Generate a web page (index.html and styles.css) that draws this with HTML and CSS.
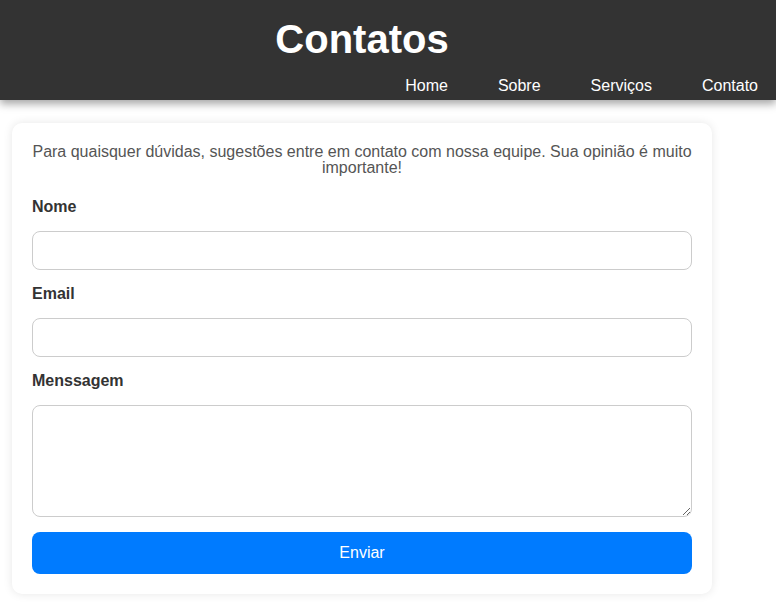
FILE: index.html
```html
<!DOCTYPE html>
<html lang="pt-BR">
<head>
<meta charset="utf-8">
<title>Contatos</title>
<link rel="stylesheet" href="styles.css">
</head>
<body>
<header class="site-header">
  <h1 class="site-title">Contatos</h1>
  <nav class="site-nav">
    <ul class="nav-list">
      <li><a href="#">Home</a></li>
      <li><a href="#">Sobre</a></li>
      <li><a href="#">Serviços</a></li>
      <li><a href="#">Contato</a></li>
    </ul>
  </nav>
</header>
<main class="main">
  <section class="card">
    <p class="intro">Para quaisquer dúvidas, sugestões entre em contato com nossa equipe. Sua opinião é muito importante!</p>
    <form class="form">
      <label class="label" for="nome">Nome</label>
      <input class="field" type="text" id="nome">
      <label class="label" for="email">Email</label>
      <input class="field" type="email" id="email">
      <label class="label" for="msg">Menssagem</label>
      <textarea class="field area" id="msg"></textarea>
      <button class="submit" type="submit">Enviar</button>
    </form>
  </section>
</main>
</body>
</html>
```
FILE: styles.css
```css
* { box-sizing: border-box; }
html, body { margin: 0; padding: 0; }
body {
  font-family: "Liberation Sans", Arial, sans-serif;
  background: #fff;
  color: #333;
}
.site-header {
  background: #333;
  color: #fff;
  height: 100px;
  padding-top: 16px;
  box-shadow: 0 4px 8px rgba(0,0,0,0.35);
  position: relative;
  z-index: 1;
}
.site-title {
  margin: 0;
  width: 724px;
  text-align: center;
  font-size: 40px;
  font-weight: bold;
  line-height: 46px;
}
.site-nav { margin-top: 15px; }
.nav-list {
  list-style: none;
  margin: 0;
  padding: 0 18px 0 0;
  display: flex;
  justify-content: flex-end;
  gap: 50px;
}
.nav-list a {
  color: #fff;
  text-decoration: none;
  font-size: 16px;
  line-height: 18px;
}
.main { padding: 23px 0 20px 12px; }
.card {
  width: 700px;
  background: #fff;
  border-radius: 10px;
  padding: 21px 20px 20px;
  box-shadow: 0 0 10px rgba(0,0,0,0.1);
}
.intro {
  margin: 0 0 22px;
  text-align: center;
  color: #555;
  font-size: 16px;
  line-height: 16px;
}
.form { display: flex; flex-direction: column; }
.label {
  font-weight: bold;
  font-size: 16px;
  line-height: 18px;
  margin-bottom: 15px;
  color: #333;
}
.field {
  width: 100%;
  height: 39px;
  border: 1px solid #ccc;
  border-radius: 8px;
  padding: 10px;
  font-family: inherit;
  font-size: 16px;
  margin-bottom: 15px;
}
.area { height: 112px; resize: vertical; }
.submit {
  height: 42px;
  border: none;
  border-radius: 8px;
  background: #007bff;
  color: #fff;
  font-family: inherit;
  font-size: 16px;
}
```
